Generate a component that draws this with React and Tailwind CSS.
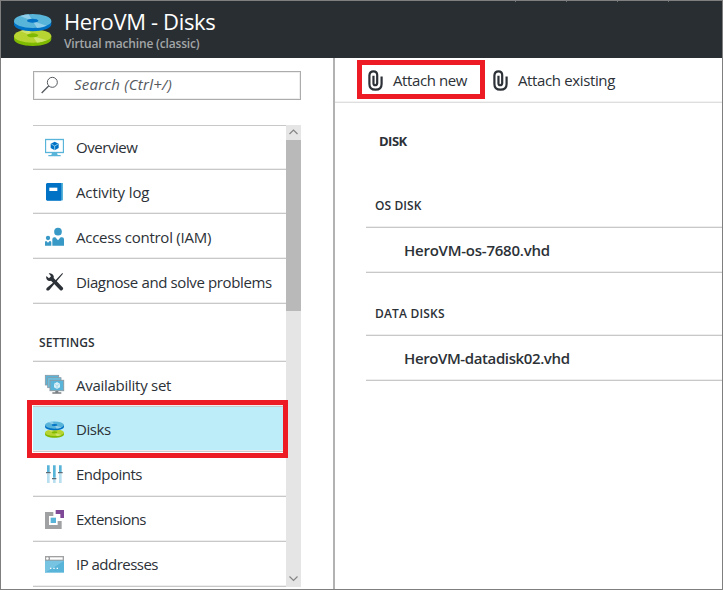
import React from "react";

const DiskShapes = () => (
  <>
    <path d="M42 108v9c0 12 25 21 56 21s56-9 56-21v-9z" fill="#7fba00" />
    <ellipse cx="98" cy="108" rx="56" ry="20" fill="#b8d432" />
    <path d="M98 108L60 93q14-5 26-5zM98 108l42 13q-12 6-29 7z" fill="#cfe36f" />
    <ellipse cx="98" cy="106" rx="17" ry="6" fill="#7fba00" />
    <path d="M42 63v10c0 12 25 21 56 21s56-9 56-21V63z" fill="#0072c6" />
    <ellipse cx="98" cy="63" rx="56" ry="21" fill="#59b4d9" />
    <path d="M98 63L60 48q14-5 26-5zM98 63l42 14q-12 6-29 7z" fill="#8fcde8" />
    <ellipse cx="98" cy="62" rx="17" ry="6" fill="#0072c6" />
  </>
);

const icons = {
  overview: (
    <svg viewBox="75 69 57 57" className="h-[19px] w-[19px]">
      <rect x="76.5" y="73.5" width="54" height="39" fill="#fff" stroke="#59b4d9" strokeWidth="4" />
      <path d="M96 113h15l2 7h9v4H85v-4h9z" fill="#59b4d9" />
      <path d="M104 80l12 6v13l-12 7-12-7V86z" fill="#0072c6" />
      <path d="M94 87l10 6 10-6M104 93v12" stroke="#a5d8ee" strokeWidth="2.5" fill="none" />
    </svg>
  ),
  log: (
    <svg viewBox="75 201 57 57" className="h-[19px] w-[19px]">
      <path d="M81 204h48v52H81z" fill="#59b4d9" />
      <path d="M78 206l4-2h42v53H81l-3-3z" fill="#0072c6" />
      <rect x="88" y="218" width="24" height="10" fill="#fff" />
    </svg>
  ),
  access: (
    <svg viewBox="75 333 57 57" className="h-[19px] w-[19px] overflow-visible">
      <g fill="#3999c6">
        <circle cx="114" cy="350" r="11.5" />
        <path d="M97 392v-19q0-6 6-6h3l8 9 8-9h4q6 0 6 6v19z" />
        <circle cx="84" cy="369" r="6.5" />
        <path d="M75 392v-10q0-4 4-4l5 5 5-5q5 0 5 4v10z" />
      </g>
    </svg>
  ),
  tools: (
    <svg viewBox="75 468 57 57" className="h-[19px] w-[19px] overflow-visible">
      <path d="M127 474l2 2-24 29-17 20q-5 3-9 0-1-4 2-7l20-16z" fill="#2c3137" />
      <path d="M86 475q8-2 13 4 4 5 2 10l28 29q2 4-2 7-4 3-7 0L93 497q-7 3-12-3-4-5-2-11l8 7 6-6z" fill="#2c3137" />
    </svg>
  ),
  availability: (
    <svg viewBox="75 42 57 57" className="h-[19px] w-[19px] overflow-visible">
      <rect x="76" y="46" width="40" height="29" fill="#59b4d9" stroke="#8a9ba5" strokeWidth="2.500" />
      <rect x="83" y="53" width="40" height="30" fill="#6cc0e0" stroke="#8a9ba5" strokeWidth="2.500" />
      <rect x="90" y="61" width="41" height="31" fill="#59b4d9" stroke="#8a9ba5" strokeWidth="3" />
      <path d="M111 66l9 5v11l-9 5-9-5V71z" fill="#d9f0f8" />
      <path d="M103 72l8 5 8-5M111 77v9" stroke="#8fcfe6" strokeWidth="2" fill="none" />
      <path d="M106 93h9v4h9v4H97v-4h9z" fill="#7a7f83" />
    </svg>
  ),
  disks: (
    <svg viewBox="42 33 112 112" className="mt-px h-[19px] w-[19px]">
      <DiskShapes />
    </svg>
  ),
  endpoints: (
    <svg viewBox="75 312 57 57" className="h-[19px] w-[19px]">
      <path d="M81 340h8v29h-8zM99 357h8v12h-8zM117 340h8v29h-8z" fill="#b8dff0" />
      <path d="M81 316h8v20h-8zM99 316h8v37h-8zM117 316h8v20h-8z" fill="#59b4d9" />
      <path d="M78 336h14v4H78zM96 354h13v4H96zM114 336h14v4h-14z" fill="#5c6b75" />
    </svg>
  ),
  extensions: (
    <svg viewBox="75 447 57 57" className="h-[19px] w-[19px] overflow-visible">
      <path d="M75 456h25v12H87v27h26v-12h12v24H75z" fill="#a0a1a2" />
      <path d="M107 450h25v24h-11v-12h-14z" fill="#804998" />
      <rect x="92" y="473" width="16" height="16" fill="#59b4d9" />
    </svg>
  ),
  ip: (
    <svg viewBox="75 582 57 57" className="h-[19px] w-[19px]">
      <rect x="75" y="588" width="57" height="50" fill="#59b4d9" />
      <path d="M75 638v-35h57z" fill="#76c3e2" />
      <rect x="75" y="588" width="57" height="14" fill="#a0a1a2" />
      <rect x="90" y="592" width="38" height="7" fill="#fff" />
      <circle cx="82" cy="595.500" r="4" fill="#fff" />
      <path d="M90 623h4v4h-4zM100 623h4v4h-4zM110 623h4v4h-4z" fill="#fff" />
    </svg>
  ),
};

const general = [
  { icon: "overview", label: "Overview", row: "h-[44px]", text: "mt-[11px] tracking-[-0.45px]" },
  { icon: "log", label: "Activity log", row: "h-[44px]", text: "mt-[12px] tracking-[-0.12px]" },
  { icon: "access", label: "Access control (IAM)", row: "h-[45px]", text: "mt-[13px] tracking-[-0.25px]" },
  { icon: "tools", label: "Diagnose and solve problems", row: "h-[45px]", text: "mt-[13px] tracking-[-0.38px]" },
];

const settings = [
  { icon: "availability", label: "Availability set", row: "h-[45px]", text: "mt-[13px] tracking-[-0.27px]" },
  { icon: "disks", label: "Disks", row: "h-[45px] bg-[#beedfa]", text: "mt-[12px] tracking-[-0.4px]" },
  { icon: "endpoints", label: "Endpoints", row: "h-[45px]", text: "mt-[12px] tracking-[-0.5px]" },
  { icon: "extensions", label: "Extensions", row: "h-[45px]", text: "mt-[12px] tracking-[-0.55px]" },
  { icon: "ip", label: "IP addresses", row: "h-[45px]", text: "mt-[12px] tracking-[-0.52px]" },
];

const rule = "border-b border-[#c8c8c8] shadow-[inset_0_-1px_0_#eeeeee]";

const NavItem = ({ icon, label, row, text }) => (
  <li className={`flex items-start pl-3 ${rule} ${row}`}>
    <span className="mt-3 w-[31px] shrink-0">{icons[icon]}</span>
    <span className={`text-[15px] leading-5 whitespace-nowrap ${text}`}>{label}</span>
  </li>
);

const Clip = () => (
  <svg viewBox="0 0 44 62" className="h-[21px] w-[15px] shrink-0" fill="none" stroke="#2c3137">
    <path d="M16 17v22q0 6 5 6t6-6V15q0-11-11-11T4 16v25q0 17 18 17t18-17V19" strokeWidth="6.500" />
  </svg>
);

const DiskGroup = ({ title, file, titleClass, fileClass, className }) => (
  <section className={className}>
    <h3 className={`h-[30px] pl-[9px] text-[12px] leading-4 font-semibold whitespace-nowrap ${rule} ${titleClass}`}>{title}</h3>
    <div className={`h-[45px] pt-[12px] pl-[38px] text-[15px] leading-5 font-semibold whitespace-nowrap ${rule} ${fileClass}`}>
      {file}
    </div>
  </section>
);

export default function App() {
  return (
    <div className="relative flex h-[590px] w-[723px] flex-col overflow-hidden border border-[#7f7f7f] bg-white font-['Open_Sans','Noto_Sans',sans-serif] text-[#2c3137]">
      <header className="flex h-[57px] shrink-0 bg-[#292e32] pl-3">
        <svg viewBox="39 39 117 102" className="mt-3 h-[34px] w-[39px] shrink-0">
          <DiskShapes />
        </svg>
        <div className="pl-3 whitespace-nowrap">
          <h1 className="mt-[6px] h-[29px] text-[22px] leading-[28px] tracking-[-0.35px] text-white">HeroVM - Disks</h1>
          <p className="text-[12px] leading-[15px] font-semibold tracking-[-0.17px] text-[#a3a6a8]">Virtual machine (classic)</p>
        </div>
        <div className="ml-auto flex h-px w-[207px] gap-[50px]">
          <i className="h-px w-px bg-[#6b7073]" />
          <i className="h-px w-px bg-[#6b7073]" />
          <i className="h-px w-px bg-[#6b7073]" />
          <i className="h-px w-px bg-[#6b7073]" />
        </div>
      </header>

      <div className="flex min-h-0 flex-1">
        <aside className="w-[334px] shrink-0 border-r-2 border-[#b2b2b2] pl-8">
          <div className="mt-[13px] flex h-[29px] w-[268px] items-start border border-[#acacac] pt-1 pl-[7px] shadow-[inset_0_0_0_1px_#eeeeee]">
            <svg viewBox="0 0 54 54" className="h-[18px] w-[18px]" fill="none" stroke="#555a5f" strokeWidth="3">
              <circle cx="34" cy="19" r="15" />
              <path d="M23 30L2 51" strokeWidth="4" />
            </svg>
            <span className="-mt-0.5 pl-[15px] text-[15px] leading-5 tracking-[0.22px] whitespace-nowrap text-[#55595e] italic">Search (Ctrl+/)</span>
          </div>

          <div className="mt-[25px] flex w-[268px]">
            <nav className="w-[253px]">
              <div className="h-px bg-[#c8c8c8]" />
              <ul>
                {general.map((item) => (
                  <NavItem key={item.icon} {...item} />
                ))}
              </ul>
              <h2 className={`h-[58px] pt-[31px] pl-[6px] text-[12px] leading-4 font-semibold tracking-[0.05px] ${rule}`}>SETTINGS</h2>
              <ul>
                {settings.map((item) => (
                  <NavItem key={item.icon} {...item} />
                ))}
              </ul>
            </nav>
            <div className="flex h-[462px] w-[15px] flex-col items-center bg-[#e5e5e5]">
              <svg viewBox="0 0 15 15" className="h-[15px] w-[15px] shrink-0" fill="none" stroke="#858585" strokeWidth="1.200">
                <path d="M3.500 9l4-4 4 4" />
              </svg>
              <div className="h-[171px] w-full bg-[#b9b9b9]" />
              <svg viewBox="0 0 15 15" className="mt-auto h-[15px] w-[15px] shrink-0" fill="none" stroke="#858585" strokeWidth="1.200">
                <path d="M3.500 4.500l4 4 4-4" />
              </svg>
            </div>
          </div>
        </aside>

        <main className="flex-1">
          <div className="flex h-[45px] items-start border-b border-[#dedede] pt-[12px] pl-[33px] text-[15px] leading-5 whitespace-nowrap shadow-[inset_0_-1px_0_#f3f3f3]">
            <button className="flex w-[125px] items-start gap-[10px]">
              <Clip />
              <span className="tracking-[-0.4px]">Attach new</span>
            </button>
            <button className="flex items-start gap-[10px]">
              <Clip />
              <span className="tracking-[-0.37px]">Attach existing</span>
            </button>
          </div>
          <h2 className="mt-[30px] pl-[44px] text-[13px] leading-4 font-bold tracking-[-0.5px]">DISK</h2>
          <div className="pl-[31px]">
            <DiskGroup className="mt-[49px]" title="OS DISK" file="HeroVM-os-7680.vhd" titleClass="tracking-[0.1px]" fileClass="tracking-[-0.24px]" />
            <DiskGroup className="mt-[33px]" title="DATA DISKS" file="HeroVM-datadisk02.vhd" titleClass="tracking-[0.18px]" fileClass="tracking-[-0.39px]" />
          </div>
        </main>
      </div>

      {/* Callout frames around the highlighted controls */}
      <div className="pointer-events-none absolute top-[59px] left-[356px] h-[39px] w-[128px] border-5 border-[#ed1c24]" />
      <div className="pointer-events-none absolute top-[399px] left-[26px] h-[58px] w-[261px] border-5 border-[#ed1c24]" />
    </div>
  );
}
